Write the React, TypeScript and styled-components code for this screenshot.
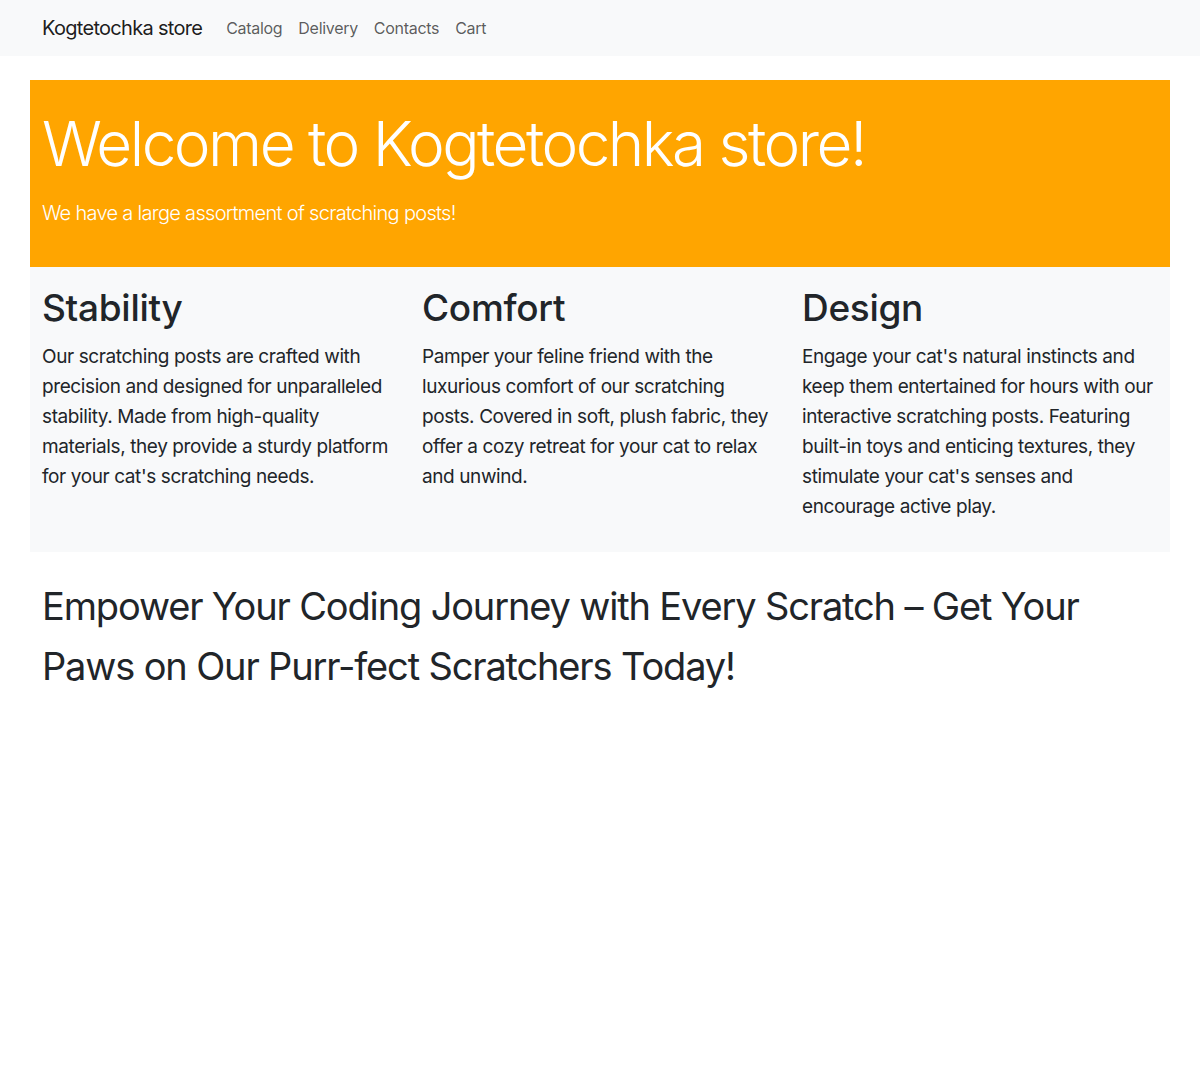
import React from "react";
import styled, { createGlobalStyle } from "styled-components";

const Global = createGlobalStyle`
  *, *::before, *::after { box-sizing: border-box; }
  body {
    margin: 0;
    font-family: Inter, "Noto Sans", sans-serif;
    font-size: 16px;
    line-height: 1.5;
    color: #212529;
    background: #fff;
  }
`;

const Navbar = styled.nav`
  background: #f8f9fa;
  padding: 8px 0;
`;

const NavContainer = styled.div`
  width: 1140px;
  margin: 0 auto;
  padding: 0 12px;
  display: flex;
  align-items: center;
`;

const Brand = styled.a`
  font-size: 20px;
  line-height: 30px;
  letter-spacing: -0.7px;
  padding: 5px 0;
  margin-right: 16px;
  color: rgba(0, 0, 0, 0.9);
  text-decoration: none;
`;

const NavList = styled.ul`
  list-style: none;
  margin: 0;
  padding: 0;
  display: flex;
`;

const NavLink = styled.a`
  display: block;
  padding: 8px;
  font-size: 16px;
  line-height: 24px;
  letter-spacing: -0.3px;
  color: rgba(0, 0, 0, 0.65);
  text-decoration: none;
`;

const Main = styled.main`
  width: 1140px;
  margin: 24px auto 0;
`;

const Hero = styled.section`
  background: #ffa500;
  color: #fff;
  padding: 27px 12px 23px;
`;

const HeroTitle = styled.h1`
  margin: 0 0 17px;
  font-size: 62px;
  font-weight: 300;
  line-height: 1.2;
  letter-spacing: -2.5px;
`;

const Lead = styled.p`
  margin: 0 0 16px;
  font-size: 20px;
  font-weight: 300;
  letter-spacing: -0.7px;
`;

const Features = styled.section`
  background: #f8f9fa;
  display: grid;
  grid-template-columns: repeat(3, 1fr);
  padding: 19px 0 14px;
`;

const Feature = styled.div`
  padding: 0 12px;
`;

const FeatureTitle = styled.h2`
  margin: 0 0 11px;
  font-size: 37px;
  font-weight: 500;
  line-height: 1.2;
  letter-spacing: -0.3px;
`;

const FeatureText = styled.p`
  margin: 0 0 16px;
  font-size: 19px;
  line-height: 30px;
  letter-spacing: -0.4px;
`;

const Slogan = styled.p`
  margin: 0;
  padding: 24px 12px;
  font-size: 38px;
  line-height: 60px;
  letter-spacing: -1.15px;
`;

const features = [
  {
    title: "Stability",
    text: "Our scratching posts are crafted with precision and designed for unparalleled stability. Made from high-quality materials, they provide a sturdy platform for your cat's scratching needs.",
  },
  {
    title: "Comfort",
    text: "Pamper your feline friend with the luxurious comfort of our scratching posts. Covered in soft, plush fabric, they offer a cozy retreat for your cat to relax and unwind.",
  },
  {
    title: "Design",
    text: "Engage your cat's natural instincts and keep them entertained for hours with our interactive scratching posts. Featuring built-in toys and enticing textures, they stimulate your cat's senses and encourage active play.",
  },
];

export default function App() {
  return (
    <>
      <Global />
      <Navbar>
        <NavContainer>
          <Brand href="#">Kogtetochka store</Brand>
          <NavList>
            {["Catalog", "Delivery", "Contacts", "Cart"].map((l) => (
              <li key={l}>
                <NavLink href="#">{l}</NavLink>
              </li>
            ))}
          </NavList>
        </NavContainer>
      </Navbar>
      <Main>
        <Hero>
          <HeroTitle>Welcome to Kogtetochka store!</HeroTitle>
          <Lead>We have a large assortment of scratching posts!</Lead>
        </Hero>
        <Features>
          {features.map((f) => (
            <Feature key={f.title}>
              <FeatureTitle>{f.title}</FeatureTitle>
              <FeatureText>{f.text}</FeatureText>
            </Feature>
          ))}
        </Features>
        <Slogan>
          Empower Your Coding Journey with Every Scratch – Get Your Paws on Our
          Purr-fect Scratchers Today!
        </Slogan>
      </Main>
    </>
  );
}
